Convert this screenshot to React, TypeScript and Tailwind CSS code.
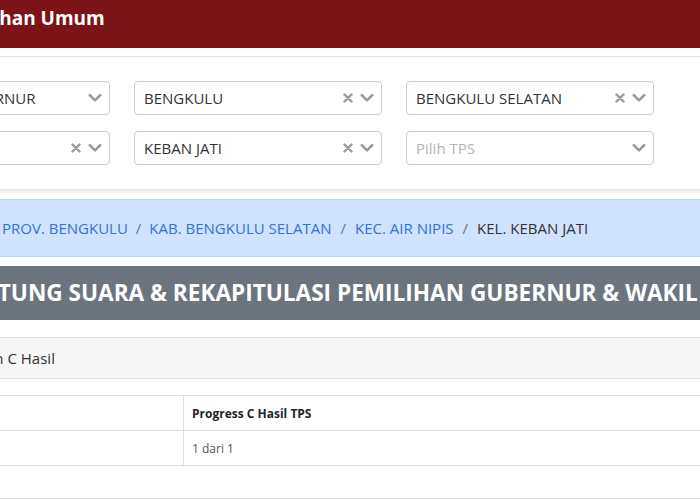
import React from "react";

const ClearIcon = () => (
  <svg width="10" height="10" viewBox="0 0 10 10" className="shrink-0">
    <path d="M1.5 1.5 L8.5 8.5 M8.5 1.5 L1.5 8.5" stroke="#999" strokeWidth="2.4" strokeLinecap="round" />
  </svg>
);

const Chevron = () => (
  <svg width="14" height="10" viewBox="0 0 14 10" className="shrink-0">
    <path d="M1.8 2.2 L7 7.4 L12.2 2.2" fill="none" stroke="#999" strokeWidth="2.6" strokeLinecap="round" strokeLinejoin="round" />
  </svg>
);

function Select({ value, placeholder, clearable }: { value?: string; placeholder?: string; clearable?: boolean }) {
  return (
    <div className="flex h-[34px] w-[248px] shrink-0 items-center rounded-[4px] border border-[#cccccc] bg-white pl-[9px] pr-[7px]">
      <div className={"flex-1 truncate text-[15px] " + (value ? "text-[#333333]" : "text-[#b3b3b3]")}>
        {value ?? placeholder}
      </div>
      {clearable && (
        <div className="mr-[7px]">
          <ClearIcon />
        </div>
      )}
      <Chevron />
    </div>
  );
}

export default function App() {
  return (
    <div className="h-[500px] w-[700px] overflow-hidden bg-white font-['Open_Sans',sans-serif] text-[#333333]">
      {/* top bar */}
      <div className="flex h-[48px] items-start whitespace-nowrap bg-[#7b1416] pt-[4px]">
        <span className="-ml-[60px] text-[19px] font-bold text-white">Pemilihan Umum</span>
      </div>

      {/* filter card */}
      <div className="mt-[8px] -ml-[200px] w-[1100px] rounded-[4px] border border-[#e3e3e3] bg-white pb-[24px] pt-[24px] shadow-[0_2px_3px_rgba(0,0,0,0.08)]">
        <div className="ml-[61px] flex flex-col gap-[16px]">
          <div className="flex gap-[24px]">
            <Select value="PEMILIHAN GUBERNUR" />
            <Select value="BENGKULU" clearable />
            <Select value="BENGKULU SELATAN" clearable />
          </div>
          <div className="flex gap-[24px]">
            <Select value="AIR NIPIS" clearable />
            <Select value="KEBAN JATI" clearable />
            <Select placeholder="Pilih TPS" />
          </div>
        </div>
      </div>

      {/* breadcrumb */}
      <div className="mt-[9px] -ml-[20px] flex h-[58px] w-[900px] items-center whitespace-nowrap rounded-[4px] border border-[#b6d4fe] bg-[#cfe2ff] pl-[21px] pt-[1px] text-[15px]">
        <span className="text-[#2f74d6]">PROV. BENGKULU</span>
        <span className="px-[8px] text-[#6c757d]">/</span>
        <span className="text-[#2f74d6]">KAB. BENGKULU SELATAN</span>
        <span className="px-[9px] text-[#6c757d]">/</span>
        <span className="text-[#2f74d6]">KEC. AIR NIPIS</span>
        <span className="px-[9px] text-[#6c757d]">/</span>
        <span className="text-[#333333]">KEL. KEBAN JATI</span>
      </div>

      {/* title */}
      <div className="mt-[9px] flex h-[54px] items-center whitespace-nowrap bg-[#6c757d]">
        <span className="-ml-[27px] text-[22.6px] font-bold text-white">
          HITUNG SUARA &amp; REKAPITULASI PEMILIHAN GUBERNUR &amp; WAKIL GUBERNUR
        </span>
      </div>

      {/* progress card */}
      <div className="mt-[17px] -ml-[20px] w-[900px] border-t border-[#dfdfdf]">
        <div className="flex h-[41px] items-center whitespace-nowrap border-b border-[#dfdfdf] bg-[#f7f7f7] text-[15px]">
          <span className="-ml-[113px]">Progress Unggahan C Hasil</span>
        </div>
        <div className="pt-[16px]">
          <div className="grid grid-cols-[204px_1fr] border-t border-[#dfdfdf] text-[12px]">
            <div className="h-[35px] border-b border-r border-[#dfdfdf]" />
            <div className="flex h-[35px] items-center border-b border-[#dfdfdf] pl-[8px] pt-[2px] font-bold text-[#212529]">
              Progress C Hasil TPS
            </div>
            <div className="h-[35px] border-b border-r border-[#dfdfdf]" />
            <div className="flex h-[35px] items-center border-b border-[#dfdfdf] pl-[8px] pt-[2px] text-[#555555]">
              1 dari 1
            </div>
          </div>
          <div className="mt-[32px] border-t border-[#dfdfdf]" />
        </div>
      </div>
    </div>
  );
}
